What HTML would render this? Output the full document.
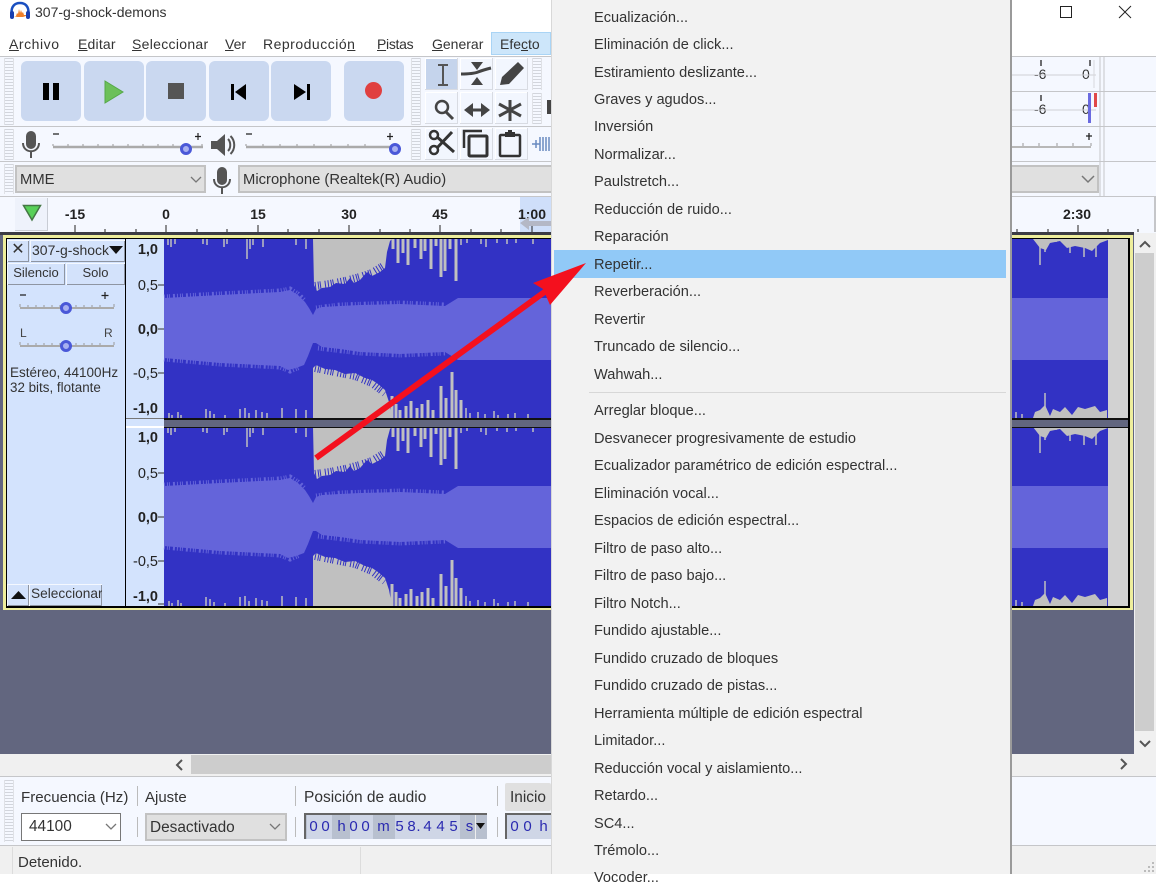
<!DOCTYPE html>
<html><head><meta charset="utf-8"><style>
html,body{margin:0;padding:0}
body{width:1156px;height:874px;overflow:hidden;position:relative;background:#fff;font-family:"Liberation Sans",sans-serif;color:#222}
.a{position:absolute}
.t{position:absolute;white-space:nowrap;line-height:16px}
.m{position:absolute;white-space:nowrap;top:36px;font-size:14px;line-height:16px;color:#333}
.m u{text-decoration:underline}
.btn{position:absolute;width:60px;height:60px;top:61px;background:#cad8f0;border-radius:6px}
.tool{position:absolute;background:#f2f6fe;box-shadow:inset -1px -1px 0 #d8dbe2,inset 1px 1px 0 #fff}
.grip{position:absolute;width:8px;background:repeating-linear-gradient(#d2d5dc 0 1px,#f5f8ff 1px 3px);border-left:1px solid #dfe1e6;border-right:1px solid #dfe1e6}
.hl{position:absolute;left:0;width:1156px;height:1px;background:#c5c6c9}
.sel{position:absolute;background:#e0e0e0;border:2px solid #c2c2c2;box-sizing:border-box;font-size:14.800px;line-height:26px;color:#333}
.i{position:absolute;left:594px;white-space:nowrap;font-size:14.600px;line-height:16px;color:#333;margin-top:1px}
.r{position:absolute;font-size:14px;font-weight:bold;color:#222;transform:translateX(-50%);top:206px;line-height:16px}
.ax{position:absolute;font-size:14.500px;line-height:16px;right:998px;color:#222;margin-top:1px}
.ax b{font-weight:bold}
.pb{position:absolute;background:#d3e2fb;box-shadow:inset 1px 1px 0 #f4f8ff,inset -1px -1px 0 #8e95a2;font-size:13px;line-height:20px;text-align:center;color:#333}
.d{position:absolute;top:819px;font-size:15px;line-height:16px;color:#2a2ab0;width:15px;text-align:center}
</style></head><body>

<!-- title bar -->
<svg class="a" style="left:9px;top:1px" width="24" height="20" viewBox="0 0 24 20"><path d="M2.500 13C2 5 6 2 11 2S20 5 19.500 13" fill="none" stroke="#1a4fc0" stroke-width="2.500"/><rect x="1" y="10" width="4" height="8" rx="2" fill="#1a3fb0"/><rect x="17" y="10" width="4" height="8" rx="2" fill="#1a3fb0"/><path d="M5 15h2l1-3 1 1 1-5 1 4 1-3 1 3 1-1 1 3h2v1l-3 1H8l-3-1z" fill="#f0802a"/></svg>
<div class="t" style="left:35px;top:4px;font-size:14px;color:#333">307-g-shock-demons</div>
<div class="a" style="left:1060px;top:6px;width:10px;height:10px;border:1px solid #222"></div>
<svg class="a" style="left:1118px;top:5px" width="14" height="14"><path d="M1 1L13 13M13 1L1 13" stroke="#222" stroke-width="1"/></svg>

<!-- menu bar -->
<div class="a" style="left:491px;top:32px;width:60px;height:23px;background:#cde6fa;border:1px solid #a9d4f5;box-sizing:border-box"></div>
<div class="m" style="left:9px;letter-spacing:.55px"><u>A</u>rchivo</div>
<div class="m" style="left:78px;letter-spacing:.2px"><u>E</u>ditar</div>
<div class="m" style="left:132px;letter-spacing:.3px"><u>S</u>eleccionar</div>
<div class="m" style="left:225px"><u>V</u>er</div>
<div class="m" style="left:263px;letter-spacing:.5px">Reproducció<u>n</u></div>
<div class="m" style="left:377px;letter-spacing:-.3px"><u>P</u>istas</div>
<div class="m" style="left:432px"><u>G</u>enerar</div>
<div class="m" style="left:500px">Efe<u>c</u>to</div>

<!-- toolbars -->
<div class="a" style="left:0;top:56px;width:1156px;height:177px;background:#f5f8ff"></div>
<div class="hl" style="top:56px"></div><div class="hl" style="top:126px"></div><div class="hl" style="top:161px"></div><div class="hl" style="top:196px"></div>
<div class="a" style="left:1011px;top:91px;width:145px;height:1px;background:#c5c6c9"></div>

<div class="grip" style="left:4px;top:58px;height:67px"></div>
<div class="grip" style="left:411px;top:58px;height:67px"></div>
<div class="grip" style="left:4px;top:129px;height:31px"></div>
<div class="grip" style="left:411px;top:129px;height:31px"></div>
<div class="grip" style="left:4px;top:164px;height:30px"></div>
<div class="grip" style="left:532px;top:58px;height:32px"></div>
<div class="grip" style="left:532px;top:93px;height:31px"></div>

<div class="btn" style="left:21px"></div><div class="btn" style="left:84px"></div><div class="btn" style="left:146px"></div><div class="btn" style="left:209px"></div><div class="btn" style="left:271px"></div><div class="btn" style="left:344px"></div>
<div class="a" style="left:43px;top:83px;width:6px;height:17px;background:#000"></div><div class="a" style="left:53px;top:83px;width:6px;height:17px;background:#000"></div>
<svg class="a" style="left:104px;top:80px" width="22" height="24"><path d="M1 1L19 12L1 23Z" fill="#6cc05a" stroke="#55a848"/></svg>
<div class="a" style="left:168px;top:83px;width:16px;height:16px;background:#555"></div>
<svg class="a" style="left:229px;top:82px" width="20" height="20"><path d="M2 2h3v16H2zM17 2v16L6 10z" fill="#000"/></svg>
<svg class="a" style="left:292px;top:82px" width="20" height="20"><path d="M15 2h3v16h-3zM2 2v16L14 10z" fill="#000"/></svg>
<div class="a" style="left:365px;top:82px;width:17px;height:17px;background:#e04040;border-radius:50%"></div>

<!-- tools -->
<div class="tool" style="left:425px;top:58px;width:33px;height:32px;background:#c5d4ec"></div>
<div class="tool" style="left:460px;top:58px;width:33px;height:32px"></div>
<div class="tool" style="left:495px;top:58px;width:33px;height:32px"></div>
<div class="tool" style="left:425px;top:92px;width:33px;height:32px"></div>
<div class="tool" style="left:460px;top:92px;width:33px;height:32px"></div>
<div class="tool" style="left:495px;top:92px;width:33px;height:32px"></div>
<div class="tool" style="left:425px;top:128px;width:33px;height:32px"></div>
<div class="tool" style="left:460px;top:128px;width:33px;height:32px"></div>
<div class="tool" style="left:495px;top:128px;width:33px;height:32px"></div>
<svg class="a" style="left:425px;top:56px" width="126" height="106" fill="none" stroke="#444">
<path d="M13 9h10M13 29h10M18 9v20" stroke="#555" stroke-width="2"/>
<path d="M36 18Q48 18 53 16T66 12" stroke-width="3"/><path d="M46 6h12l-6 8zM46 29h12l-6-8z" fill="#444" stroke="none"/>
<path d="M75 29l2-8 16-15 6 6-15 16z" fill="#444" stroke="none"/>
<circle cx="17" cy="51" r="6" stroke-width="2.500"/><path d="M21 56l7 7" stroke-width="3"/>
<path d="M43 54h18" stroke-width="3"/><path d="M48 47l-9 7 9 7zM56 47l9 7-9 7z" fill="#444" stroke="none"/>
<path d="M85 44v21M74 48l22 12M96 48L74 60" stroke-width="3"/>
<path d="M11 80l18 16M27 76L11 93" stroke="#333" stroke-width="3"/><circle cx="9" cy="79" r="4" fill="#f2f6fe" stroke="#333" stroke-width="2.500"/><circle cx="9" cy="94" r="4" fill="#f2f6fe" stroke="#333" stroke-width="2.500"/>
<path d="M39 92V75h18" stroke="#333" stroke-width="2.500"/><rect x="44" y="80" width="18" height="20" rx="1" stroke="#333" stroke-width="3"/>
<rect x="75" y="79" width="20" height="21" rx="1" stroke="#333" stroke-width="2.500"/><path d="M80 81v-5h3v-2h4v2h3v5z" fill="#333" stroke="none"/>
<path d="M107 88h8M111 84v8M115 81v14M118 81v14M121 81v14M124 81v14" stroke="#6a8ac0" stroke-width="1.500"/>
</svg>
<div class="a" style="left:547px;top:100px;width:4px;height:14px;background:#444"></div>

<!-- mic slider row -->
<svg class="a" style="left:20px;top:130px" width="22" height="30"><rect x="6" y="1" width="10" height="18" rx="5" fill="#555"/><path d="M3 13c0 11 16 11 16 0" fill="none" stroke="#555" stroke-width="2"/><path d="M11 21v7" stroke="#555" stroke-width="2"/></svg>
<svg class="a" style="left:50px;top:130px" width="156" height="30"><path d="M3 4h6M148 3v7M145 6.500h6" stroke="#222" stroke-width="1.200"/><path d="M3 17h150" stroke="#aaa" stroke-width="2.500"/><path d="M3 14v2M18 14v2M33 14v2M48 14v2M63 14v2M78 14v2M93 14v2M108 14v2M123 14v2M152 14v2" stroke="#999"/><circle cx="136" cy="19" r="4.500" fill="#a8b0f0" stroke="#4a58d8" stroke-width="3"/></svg>
<svg class="a" style="left:210px;top:132px" width="26" height="26"><path d="M1 9h6l8-7v22l-8-7H1z" fill="#555"/><path d="M18 7c3 3 3 9 0 12M20.500 4c5 5 5 13 0 18" fill="none" stroke="#555" stroke-width="2"/></svg>
<svg class="a" style="left:243px;top:130px" width="160" height="30"><path d="M3 4h6M147 3v7M144 6.500h6" stroke="#222" stroke-width="1.200"/><path d="M3 17h150" stroke="#aaa" stroke-width="2.500"/><path d="M3 14v2M20 14v2M37 14v2M54 14v2M71 14v2M88 14v2M105 14v2M122 14v2" stroke="#999"/><circle cx="152" cy="19" r="4.500" fill="#a8b0f0" stroke="#4a58d8" stroke-width="3"/></svg>

<!-- device row -->
<div class="sel" style="left:15px;top:165px;width:191px;height:28px;padding-left:3px">MME</div>
<svg class="a" style="left:190px;top:176px" width="12" height="8"><path d="M1 1l5 5 5-5" fill="none" stroke="#777" stroke-width="1.300"/></svg>
<svg class="a" style="left:211px;top:166px" width="22" height="30"><rect x="6" y="1" width="10" height="18" rx="5" fill="#555"/><path d="M3 13c0 11 16 11 16 0" fill="none" stroke="#555" stroke-width="2"/><path d="M11 21v7" stroke="#555" stroke-width="2"/></svg>
<div class="sel" style="left:238px;top:165px;width:320px;height:28px;padding-left:3px">Microphone (Realtek(R) Audio)</div>

<!-- ruler -->
<div class="a" style="left:520px;top:197px;width:31px;height:35px;background:#cfdffa"></div>
<div class="a" style="left:15px;top:198px;width:33px;height:33px;background:#eef2fb;box-shadow:inset -1px -1px 0 #c8ccd4"></div>
<svg class="a" style="left:22px;top:204px" width="22" height="19"><path d="M1.500 1.500h17L10 16z" fill="#58d058" stroke="#447744" stroke-width="1.500"/></svg>
<div class="r" style="left:75px">-15</div><div class="r" style="left:166px">0</div><div class="r" style="left:258px">15</div><div class="r" style="left:349px">30</div><div class="r" style="left:440px">45</div><div class="r" style="left:532px">1:00</div><div class="r" style="left:1077px">2:30</div>
<svg class="a" style="left:0;top:224px" width="1156" height="9"><path d="M75 1v7M105 5v3M136 5v3M166 1v7M197 5v3M227 5v3M258 1v7M288 5v3M319 5v3M349 1v7M380 5v3M410 5v3M440 1v7M471 5v3M501 5v3M532 1v7M1017 5v3M1048 5v3M1078 1v7M1108 5v3M1138 5v3" stroke="#222"/></svg>
<svg class="a" style="left:520px;top:216px" width="31" height="16"><path d="M0 7L9 1v4h22v5H9v4z" fill="#b4b8c6"/></svg>
<div class="a" style="left:0;top:232px;width:1134px;height:3px;background:#3c3c44"></div>
<div class="a" style="left:0;top:235px;width:1134px;height:519px;background:#62667f"></div>

<!-- track -->
<div class="a" style="left:3px;top:235px;width:1130px;height:375px;background:#eeee9c"></div>
<div class="a" style="left:6px;top:238px;width:1124px;height:370px;background:#000"></div>
<div class="a" style="left:7px;top:239px;width:118px;height:367px;background:#d3e3fd"></div>
<div class="a" style="left:126px;top:239px;width:38px;height:367px;background:#d3e3fd"></div>
<div class="a" style="left:126px;top:418px;width:38px;height:1px;background:#777"></div>
<div class="a" style="left:126px;top:426px;width:38px;height:2px;background:#fff"></div>

<div class="pb" style="left:7px;top:240px;width:22px;height:22px;font-size:16px">✕</div>
<div class="pb" style="left:30px;top:240px;width:95px;height:22px;text-align:left;padding-left:2px;box-sizing:border-box;font-size:14px">307-g-shock</div>
<svg class="a" style="left:109px;top:246px" width="14" height="9"><path d="M0 0h14L7 8z" fill="#111"/></svg>
<div class="pb" style="left:7px;top:263px;width:58px;height:22px">Silencio</div>
<div class="pb" style="left:66px;top:263px;width:59px;height:22px">Solo</div>
<svg class="a" style="left:16px;top:290px" width="104" height="66">
<path d="M4 5h6M89 2v7M85.500 5.500h7" stroke="#222" stroke-width="1.200"/>
<path d="M4 18h94M4 56h94" stroke="#aaa" stroke-width="2"/>
<path d="M4 14v3M12 15v2M20 15v2M28 15v2M36 15v2M44 15v2M60 15v2M68 15v2M76 15v2M84 15v2M98 14v3M4 52v3M12 53v2M20 53v2M28 53v2M36 53v2M44 53v2M60 53v2M68 53v2M76 53v2M84 53v2M98 52v3" stroke="#999"/>
<circle cx="50" cy="18" r="4.500" fill="#a8b0f0" stroke="#4a58d8" stroke-width="3"/><circle cx="50" cy="56" r="4.500" fill="#a8b0f0" stroke="#4a58d8" stroke-width="3"/>
</svg>
<div class="t" style="left:20px;top:325px;font-size:12px;color:#444">L</div><div class="t" style="left:104px;top:325px;font-size:12px;color:#444">R</div>
<div class="t" style="left:10px;top:365px;font-size:13.500px;color:#333">Estéreo, 44100Hz</div>
<div class="t" style="left:10px;top:380px;font-size:13.400px;color:#333">32 bits, flotante</div>
<div class="pb" style="left:7px;top:584px;width:22px;height:22px"></div>
<svg class="a" style="left:11px;top:591px" width="15" height="9"><path d="M0 8h15L7.500 0z" fill="#111"/></svg>
<div class="pb" style="left:29px;top:584px;width:73px;height:22px;text-align:left;padding-left:2px;box-sizing:border-box;overflow:hidden;font-size:13.700px">Seleccionar</div>

<div class="ax" style="top:241px"><b>1,0</b></div><div class="ax" style="top:277px">0,5</div><div class="ax" style="top:321px"><b>0,0</b></div><div class="ax" style="top:365px">-0,5</div><div class="ax" style="top:400px"><b>-1,0</b></div>
<div class="ax" style="top:429px"><b>1,0</b></div><div class="ax" style="top:465px">0,5</div><div class="ax" style="top:509px"><b>0,0</b></div><div class="ax" style="top:553px">-0,5</div><div class="ax" style="top:588px"><b>-1,0</b></div>

<!-- waveform -->
<svg class="a" style="left:0;top:0" width="1156" height="874" viewBox="0 0 1156 874">
<defs><g id="ch">
<rect x="164" y="239" width="964" height="179" fill="#c0c0c0"/>
<path d="M164 239H313L314 285 317 291 322 288 330 287 336 283 345 284 350 278 354 283 360 280 367 272 372 276 380 272 385 268 387 252 390 241 392 239H1108V418H392L389 402 385 390 378 384 372 380 365 378 355 373 345 374 335 370 325 369 316 365 313 368V418H164Z" fill="#3232c4"/>
<path d="M315 286L330 284 345 281 360 277 372 273 385 265M315 368L335 372 355 376 372 383 385 393" fill="none" stroke="#3232c4" stroke-width="8" stroke-dasharray="1 2 1 1 1 4 1 2"/>
<path d="M168 239v6M171 239v8M175 239v5M203 239v5M207 239v6M224 239v8M227 239v5M247 239v20M250 239v10M253 239v6M263 239v8M296 239v6M306 239v10M461 239v6M467 239v4M481 239v5M486 239v8M497 239v4M507 239v5M516 239v4M533 239v5M1040 239v26M1045 239v13M1056 239v3M1070 239v14M1084 239v18M1096 239v18" stroke="#c0c0c0" stroke-width="1.500" fill="none"/>
<path d="M393 239v10M398 239v24M403 239v14M408 239v26M415 239v9M421 239v20M425 239v12M431 239v30M436 239v7M441 239v38M445 239v32M450 239v10M456 239v42" stroke="#c0c0c0" stroke-width="3" fill="none"/>
<path d="M1033 239L1040 248 1046 250 1050 243 1060 241 1067 248 1075 246 1085 248 1092 251 1100 243 1108 240V239Z" fill="#c0c0c0"/>
<path d="M169 418v-5M172 418v-3M178 418v-6M181 418v-3M206 418v-9M210 418v-7M214 418v-4M225 418v-3M240 418v-9M245 418v-10M249 418v-5M256 418v-8M262 418v-6M267 418v-5M282 418v-10M296 418v-9M306 418v-8M466 418v-10M470 418v-5M478 418v-6M485 418v-4M494 418v-7M498 418v-3M508 418v-4M515 418v-5M528 418v-4M1016 418v-6M1022 418v-4M1045 418v-25" stroke="#c0c0c0" stroke-width="1.500" fill="none"/>
<path d="M392 418v-22M396 418v-14M400 418v-8M406 418v-12M411 418v-17M417 418v-10M422 418v-14M428 418v-18M433 418v-8M441 418v-32M446 418v-20M452 418v-46M456 418v-28M461 418v-18" stroke="#c0c0c0" stroke-width="3" fill="none"/>
<path d="M1033 418L1035 412 1040 410 1045 405 1050 416 1053 409 1060 412 1065 407 1072 415 1078 407 1085 409 1095 406 1100 412 1107 410V418Z" fill="#c0c0c0"/>
<path d="M164 298L220 295 280 292 290 290 298 295 305 302 309 308 313 315 316 309 322 307 340 306 360 305 400 304 445 306 458 298H1108V360H458L445 352 400 354 360 352 340 349 322 347 316 343 313 343 308 356 304 365 296 368 288 370 280 366 220 363 164 358Z" fill="#6464da"/>
<path d="M164 297L220 294 280 291 290 289 298 294 305 301M316 308L340 305 400 303 445 305M164 359L220 364 280 367 290 371 300 367M318 348L360 353 400 355 445 353" fill="none" stroke="#6464da" stroke-width="5" stroke-dasharray="1 2 1 1 1 3 2 2"/>
</g></defs>
<use href="#ch"/>
<use href="#ch" transform="translate(0 188)"/>
<rect x="1108" y="239" width="20" height="367" fill="#d2d2d2"/>
<rect x="164" y="418" width="964" height="2" fill="#111"/>
<rect x="164" y="420" width="964" height="7" fill="#62667f"/>
<rect x="164" y="427" width="964" height="1" fill="#111"/>
<rect x="164" y="606" width="966" height="2" fill="#000"/>
<path d="M158 285h6M158 329h6M158 373h6M158 473h6M158 517h6M158 561h6M158 604h6" stroke="#333"/>
</svg>

<!-- meters right -->
<div class="t" style="left:1034px;top:66px;font-size:14px;color:#333">-6</div><div class="t" style="left:1082px;top:66px;font-size:14px;color:#333">0</div>
<div class="t" style="left:1034px;top:101px;font-size:14px;color:#333">-6</div><div class="t" style="left:1082px;top:101px;font-size:14px;color:#333">0</div>
<svg class="a" style="left:1011px;top:57px" width="145" height="140">
<path d="M0 18h85M0 53h85" stroke="#cfcfd4"/>
<path d="M30 3v6M79 3v6M30 38v6M79 38v6" stroke="#222" stroke-width="1.300"/>
<rect x="77" y="36" width="3" height="30" fill="#6a6ae0"/><rect x="83" y="36" width="3" height="14" fill="#e04848"/>
<path d="M83 3v28" stroke="#d8d8dc"/>
<path d="M0 90h80" stroke="#b8b8b8" stroke-width="2"/><path d="M12 86v3M28 86v3M46 86v3M62 86v3M80 86v3" stroke="#999"/>
<path d="M75 79h6M78 76v7" stroke="#222" stroke-width="1.300"/>
<path d="M89 0v139M93 0v139" stroke="#c5c6c9"/>
</svg>
<div class="a" style="left:1011px;top:165px;width:88px;height:28px;background:#e0e0e0;border:2px solid #c2c2c2;border-left:0;box-sizing:border-box"></div>
<svg class="a" style="left:1081px;top:175px" width="14" height="9"><path d="M1 1l6 6 6-6" fill="none" stroke="#777" stroke-width="1.500"/></svg>
<div class="a" style="left:1154px;top:197px;width:2px;height:35px;background:#c5c6c9"></div>

<!-- scrollbars -->
<div class="a" style="left:1134px;top:233px;width:22px;height:543px;background:#f0f0f0"></div>
<div class="a" style="left:1135px;top:253px;width:19px;height:478px;background:#cdcdcd"></div>
<svg class="a" style="left:1138px;top:240px" width="14" height="9"><path d="M2 7l5-5 5 5" fill="none" stroke="#555" stroke-width="2"/></svg>
<svg class="a" style="left:1138px;top:739px" width="14" height="9"><path d="M2 2l5 5 5-5" fill="none" stroke="#555" stroke-width="2"/></svg>
<div class="a" style="left:0;top:754px;width:1156px;height:22px;background:#f0f0f0"></div>
<div class="a" style="left:191px;top:755px;width:820px;height:19px;background:#cdcdcd"></div>
<svg class="a" style="left:175px;top:759px" width="10" height="12"><path d="M7 1L2 6l5 5" fill="none" stroke="#555" stroke-width="2"/></svg>
<svg class="a" style="left:1119px;top:758px" width="10" height="12"><path d="M2 1l5 5-5 5" fill="none" stroke="#555" stroke-width="2"/></svg>

<!-- bottom toolbar -->
<div class="a" style="left:0;top:776px;width:1156px;height:70px;background:#f5f8ff;border-top:1px solid #c5c6c9;border-bottom:1px solid #c5c6c9;box-sizing:border-box"></div>
<div class="grip" style="left:4px;top:780px;height:62px"></div>
<div class="t" style="left:21px;top:790px;font-size:15.100px;color:#333">Frecuencia (Hz)</div>
<div class="t" style="left:145px;top:790px;font-size:15px;color:#333">Ajuste</div>
<div class="t" style="left:304px;top:790px;font-size:15.500px;color:#333">Posición de audio</div>
<div class="a" style="left:137px;top:786px;width:1px;height:20px;background:#bbb"></div>
<div class="a" style="left:137px;top:817px;width:1px;height:20px;background:#bbb"></div>
<div class="a" style="left:295px;top:786px;width:1px;height:20px;background:#bbb"></div>
<div class="a" style="left:295px;top:817px;width:1px;height:20px;background:#bbb"></div>
<div class="a" style="left:497px;top:786px;width:1px;height:20px;background:#bbb"></div>
<div class="a" style="left:497px;top:817px;width:1px;height:20px;background:#bbb"></div>
<div class="a" style="left:21px;top:813px;width:100px;height:28px;background:#fff;border:1px solid #777;box-sizing:border-box;font-size:15.400px;line-height:26px;padding-left:7px;color:#333">44100</div>
<svg class="a" style="left:105px;top:823px" width="12" height="8"><path d="M1 1l5 5 5-5" fill="none" stroke="#777" stroke-width="1.300"/></svg>
<div class="sel" style="left:145px;top:813px;width:142px;height:28px;padding-left:3px;line-height:25px;font-size:15.400px">Desactivado</div>
<svg class="a" style="left:269px;top:823px" width="12" height="8"><path d="M1 1l5 5 5-5" fill="none" stroke="#777" stroke-width="1.300"/></svg>
<div class="a" style="left:505px;top:783px;width:46px;height:28px;background:#e0e0e0;border-radius:2px;font-size:15.400px;line-height:29px;padding-left:5px;box-sizing:border-box;color:#333">Inicio</div>
<div class="a" style="left:304px;top:813px;width:183px;height:26px;background:#b8c0cf;border-top:2px solid #666;border-left:2px solid #666;box-sizing:border-box"></div>
<div class="a" style="left:307px;top:815px;width:25px;height:24px;background:#cfd6e6"></div>
<div class="a" style="left:350px;top:815px;width:23px;height:24px;background:#cfd6e6"></div>
<div class="a" style="left:395px;top:815px;width:28px;height:24px;background:#cfd6e6"></div>
<div class="a" style="left:423px;top:815px;width:37px;height:24px;background:#cfd6e6"></div>
<div class="a" style="left:475px;top:815px;width:1px;height:24px;background:#eee"></div>
<div class="d" style="left:306px">0</div><div class="d" style="left:318px">0</div><div class="d" style="left:334px">h</div><div class="d" style="left:346px">0</div><div class="d" style="left:358px">0</div><div class="d" style="left:376px">m</div><div class="d" style="left:392px">5</div><div class="d" style="left:404px">8</div><div class="d" style="left:411px">.</div><div class="d" style="left:420px">4</div><div class="d" style="left:433px">4</div><div class="d" style="left:446px">5</div><div class="d" style="left:462px">s</div>
<svg class="a" style="left:476px;top:823px" width="9" height="6"><path d="M0 0h9L4.500 6z" fill="#111"/></svg>
<div class="a" style="left:505px;top:813px;width:46px;height:26px;background:#cfd6e6;border-top:2px solid #666;border-left:2px solid #666;box-sizing:border-box"></div>
<div class="d" style="left:507px">0</div><div class="d" style="left:520px">0</div><div class="d" style="left:536px">h</div>

<!-- status bar -->
<div class="a" style="left:0;top:846px;width:1156px;height:28px;background:#f0f0f0"></div>
<div class="a" style="left:12px;top:847px;width:1px;height:27px;background:#dcdcdc"></div>
<div class="a" style="left:360px;top:847px;width:1px;height:27px;background:#dcdcdc"></div>
<div class="t" style="left:18px;top:855px;font-size:15px;color:#333">Detenido.</div>
<svg class="a" style="left:1142px;top:860px" width="14" height="14"><path d="M10 2h2v2h-2zM6 6h2v2H6zM10 6h2v2h-2zM2 10h2v2H2zM6 10h2v2H6zM10 10h2v2h-2z" fill="#bbb"/></svg>

<!-- menu -->
<div class="a" style="left:551px;top:0;width:459px;height:874px;background:#f2f2f2;border-left:1px solid #d8d8d8;box-sizing:border-box"></div>
<div class="a" style="left:1010px;top:0;width:2px;height:874px;background:#9a9a9a"></div>
<div class="a" style="left:554px;top:250px;width:452px;height:28px;background:#91c9f7"></div>
<div class="a" style="left:589px;top:392px;width:417px;height:1px;background:#d7d7d7"></div>
<div class="i" style="top:9px">Ecualización...</div>
<div class="i" style="top:36px">Eliminación de click...</div>
<div class="i" style="top:64px">Estiramiento deslizante...</div>
<div class="i" style="top:91px">Graves y agudos...</div>
<div class="i" style="top:118px">Inversión</div>
<div class="i" style="top:146px">Normalizar...</div>
<div class="i" style="top:173px">Paulstretch...</div>
<div class="i" style="top:201px">Reducción de ruido...</div>
<div class="i" style="top:228px">Reparación</div>
<div class="i" style="top:256px">Repetir...</div>
<div class="i" style="top:283px">Reverberación...</div>
<div class="i" style="top:311px">Revertir</div>
<div class="i" style="top:338px">Truncado de silencio...</div>
<div class="i" style="top:366px">Wahwah...</div>
<div class="i" style="top:402px">Arreglar bloque...</div>
<div class="i" style="top:430px">Desvanecer progresivamente de estudio</div>
<div class="i" style="top:457px">Ecualizador paramétrico de edición espectral...</div>
<div class="i" style="top:485px">Eliminación vocal...</div>
<div class="i" style="top:512px">Espacios de edición espectral...</div>
<div class="i" style="top:540px">Filtro de paso alto...</div>
<div class="i" style="top:567px">Filtro de paso bajo...</div>
<div class="i" style="top:595px">Filtro Notch...</div>
<div class="i" style="top:622px">Fundido ajustable...</div>
<div class="i" style="top:650px">Fundido cruzado de bloques</div>
<div class="i" style="top:677px">Fundido cruzado de pistas...</div>
<div class="i" style="top:705px">Herramienta múltiple de edición espectral</div>
<div class="i" style="top:732px">Limitador...</div>
<div class="i" style="top:760px">Reducción vocal y aislamiento...</div>
<div class="i" style="top:787px">Retardo...</div>
<div class="i" style="top:815px">SC4...</div>
<div class="i" style="top:842px">Trémolo...</div>
<div class="i" style="top:869px">Vocoder...</div>

<!-- arrow -->
<svg class="a" style="left:0;top:0" width="1156" height="874"><path d="M316 458L550 288" stroke="#f4101e" stroke-width="6"/><path d="M586 263L533 283 543 289 550 305Z" fill="#f4101e"/></svg>
</body></html>
